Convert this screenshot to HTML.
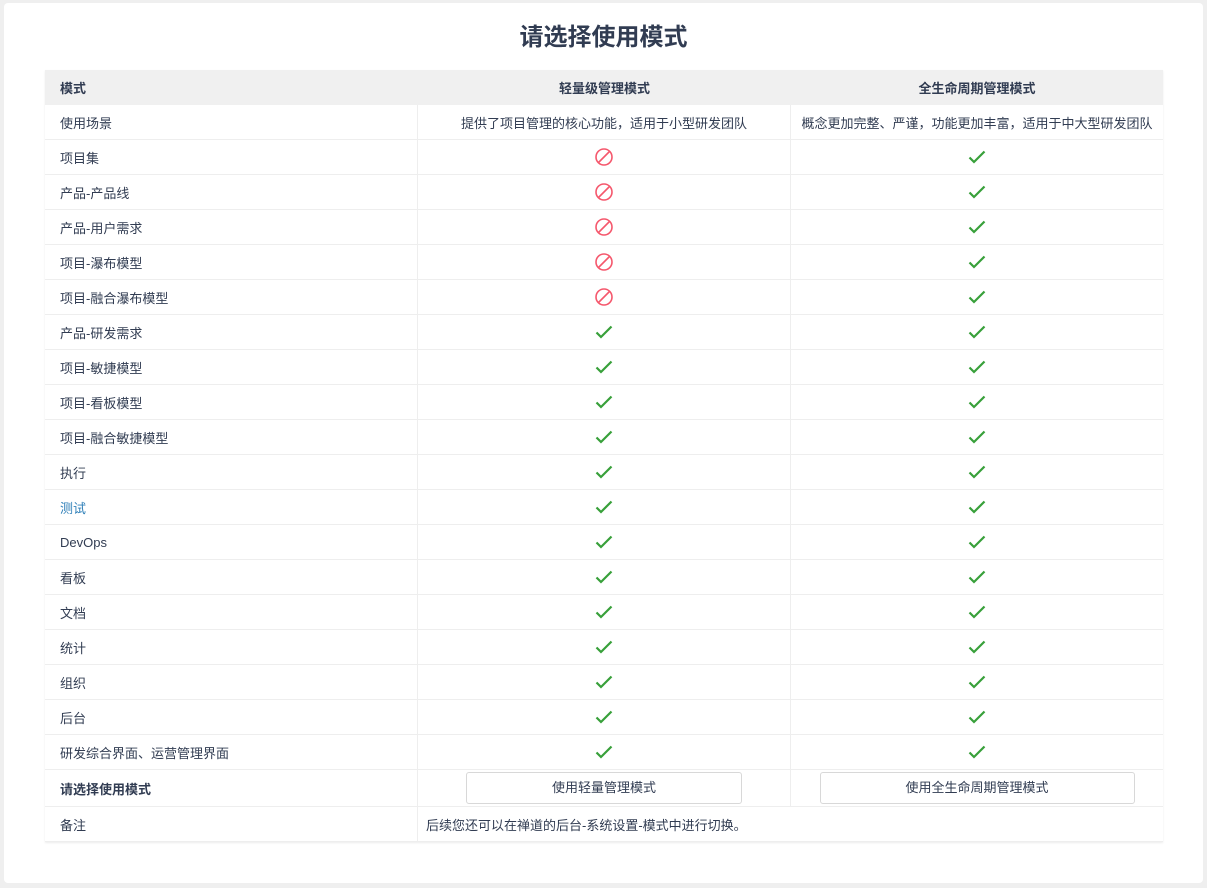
<!DOCTYPE html>
<html><head><meta charset="utf-8"><style>
body{margin:0;background:#efefef;font-family:"Liberation Sans","Noto Sans CJK SC",sans-serif;font-size:13px;color:#313c52;}
.card{position:absolute;left:4px;top:3px;width:1199px;height:880px;background:#fff;border-radius:4px;}
h1{position:absolute;left:0;right:0;top:20px;margin:0;text-align:center;font-size:24px;font-weight:bold;color:#313c52;line-height:30px;}
table{position:absolute;left:41px;top:67px;width:1118px;border-collapse:separate;border-spacing:0;box-shadow:0 1px 2px rgba(0,0,0,.08);}
td,th{height:34px;padding:0;border-bottom:1px solid #eee;border-right:1px solid #eee;box-sizing:content-box;}
th{height:35px;background:#f0f0f0;font-weight:bold;border:none;}
td:first-child,th:first-child{padding-left:15px;text-align:left;width:357px;}
td:nth-child(2),th:nth-child(2){width:372px;text-align:center;}
td:nth-child(3),th:nth-child(3){text-align:center;border-right:none;}
.btn{display:inline-block;height:30px;line-height:30px;border:1px solid #d8d8d8;border-radius:3px;font-size:13px;color:#313c52;background:#fff;}
svg{vertical-align:middle;}
</style></head><body><div class="card">
<h1>请选择使用模式</h1>
<table>
<tr><th>模式</th><th>轻量级管理模式</th><th>全生命周期管理模式</th></tr>
<tr><td>使用场景</td><td>提供了项目管理的核心功能，适用于小型研发团队</td><td>概念更加完整、严谨，功能更加丰富，适用于中大型研发团队</td></tr>
<tr><td>项目集</td><td><svg width="20" height="20"><circle cx="10" cy="10" r="8" fill="none" stroke="#f5576c" stroke-width="1.6"/><line x1="4.5" y1="15.5" x2="15.5" y2="4.5" stroke="#f5576c" stroke-width="1.6"/></svg></td><td><svg width="20" height="20"><path d="M2.5 10.5l4.5 4.5 10.5-10.5" fill="none" stroke="#38a03a" stroke-width="2.2"/></svg></td></tr>
<tr><td>产品-产品线</td><td><svg width="20" height="20"><circle cx="10" cy="10" r="8" fill="none" stroke="#f5576c" stroke-width="1.6"/><line x1="4.5" y1="15.5" x2="15.5" y2="4.5" stroke="#f5576c" stroke-width="1.6"/></svg></td><td><svg width="20" height="20"><path d="M2.5 10.5l4.5 4.5 10.5-10.5" fill="none" stroke="#38a03a" stroke-width="2.2"/></svg></td></tr>
<tr><td>产品-用户需求</td><td><svg width="20" height="20"><circle cx="10" cy="10" r="8" fill="none" stroke="#f5576c" stroke-width="1.6"/><line x1="4.5" y1="15.5" x2="15.5" y2="4.5" stroke="#f5576c" stroke-width="1.6"/></svg></td><td><svg width="20" height="20"><path d="M2.5 10.5l4.5 4.5 10.5-10.5" fill="none" stroke="#38a03a" stroke-width="2.2"/></svg></td></tr>
<tr><td>项目-瀑布模型</td><td><svg width="20" height="20"><circle cx="10" cy="10" r="8" fill="none" stroke="#f5576c" stroke-width="1.6"/><line x1="4.5" y1="15.5" x2="15.5" y2="4.5" stroke="#f5576c" stroke-width="1.6"/></svg></td><td><svg width="20" height="20"><path d="M2.5 10.5l4.5 4.5 10.5-10.5" fill="none" stroke="#38a03a" stroke-width="2.2"/></svg></td></tr>
<tr><td>项目-融合瀑布模型</td><td><svg width="20" height="20"><circle cx="10" cy="10" r="8" fill="none" stroke="#f5576c" stroke-width="1.6"/><line x1="4.5" y1="15.5" x2="15.5" y2="4.5" stroke="#f5576c" stroke-width="1.6"/></svg></td><td><svg width="20" height="20"><path d="M2.5 10.5l4.5 4.5 10.5-10.5" fill="none" stroke="#38a03a" stroke-width="2.2"/></svg></td></tr>
<tr><td>产品-研发需求</td><td><svg width="20" height="20"><path d="M2.5 10.5l4.5 4.5 10.5-10.5" fill="none" stroke="#38a03a" stroke-width="2.2"/></svg></td><td><svg width="20" height="20"><path d="M2.5 10.5l4.5 4.5 10.5-10.5" fill="none" stroke="#38a03a" stroke-width="2.2"/></svg></td></tr>
<tr><td>项目-敏捷模型</td><td><svg width="20" height="20"><path d="M2.5 10.5l4.5 4.5 10.5-10.5" fill="none" stroke="#38a03a" stroke-width="2.2"/></svg></td><td><svg width="20" height="20"><path d="M2.5 10.5l4.5 4.5 10.5-10.5" fill="none" stroke="#38a03a" stroke-width="2.2"/></svg></td></tr>
<tr><td>项目-看板模型</td><td><svg width="20" height="20"><path d="M2.5 10.5l4.5 4.5 10.5-10.5" fill="none" stroke="#38a03a" stroke-width="2.2"/></svg></td><td><svg width="20" height="20"><path d="M2.5 10.5l4.5 4.5 10.5-10.5" fill="none" stroke="#38a03a" stroke-width="2.2"/></svg></td></tr>
<tr><td>项目-融合敏捷模型</td><td><svg width="20" height="20"><path d="M2.5 10.5l4.5 4.5 10.5-10.5" fill="none" stroke="#38a03a" stroke-width="2.2"/></svg></td><td><svg width="20" height="20"><path d="M2.5 10.5l4.5 4.5 10.5-10.5" fill="none" stroke="#38a03a" stroke-width="2.2"/></svg></td></tr>
<tr><td>执行</td><td><svg width="20" height="20"><path d="M2.5 10.5l4.5 4.5 10.5-10.5" fill="none" stroke="#38a03a" stroke-width="2.2"/></svg></td><td><svg width="20" height="20"><path d="M2.5 10.5l4.5 4.5 10.5-10.5" fill="none" stroke="#38a03a" stroke-width="2.2"/></svg></td></tr>
<tr><td style="color:#2e7fb8">测试</td><td><svg width="20" height="20"><path d="M2.5 10.5l4.5 4.5 10.5-10.5" fill="none" stroke="#38a03a" stroke-width="2.2"/></svg></td><td><svg width="20" height="20"><path d="M2.5 10.5l4.5 4.5 10.5-10.5" fill="none" stroke="#38a03a" stroke-width="2.2"/></svg></td></tr>
<tr><td>DevOps</td><td><svg width="20" height="20"><path d="M2.5 10.5l4.5 4.5 10.5-10.5" fill="none" stroke="#38a03a" stroke-width="2.2"/></svg></td><td><svg width="20" height="20"><path d="M2.5 10.5l4.5 4.5 10.5-10.5" fill="none" stroke="#38a03a" stroke-width="2.2"/></svg></td></tr>
<tr><td>看板</td><td><svg width="20" height="20"><path d="M2.5 10.5l4.5 4.5 10.5-10.5" fill="none" stroke="#38a03a" stroke-width="2.2"/></svg></td><td><svg width="20" height="20"><path d="M2.5 10.5l4.5 4.5 10.5-10.5" fill="none" stroke="#38a03a" stroke-width="2.2"/></svg></td></tr>
<tr><td>文档</td><td><svg width="20" height="20"><path d="M2.5 10.5l4.5 4.5 10.5-10.5" fill="none" stroke="#38a03a" stroke-width="2.2"/></svg></td><td><svg width="20" height="20"><path d="M2.5 10.5l4.5 4.5 10.5-10.5" fill="none" stroke="#38a03a" stroke-width="2.2"/></svg></td></tr>
<tr><td>统计</td><td><svg width="20" height="20"><path d="M2.5 10.5l4.5 4.5 10.5-10.5" fill="none" stroke="#38a03a" stroke-width="2.2"/></svg></td><td><svg width="20" height="20"><path d="M2.5 10.5l4.5 4.5 10.5-10.5" fill="none" stroke="#38a03a" stroke-width="2.2"/></svg></td></tr>
<tr><td>组织</td><td><svg width="20" height="20"><path d="M2.5 10.5l4.5 4.5 10.5-10.5" fill="none" stroke="#38a03a" stroke-width="2.2"/></svg></td><td><svg width="20" height="20"><path d="M2.5 10.5l4.5 4.5 10.5-10.5" fill="none" stroke="#38a03a" stroke-width="2.2"/></svg></td></tr>
<tr><td>后台</td><td><svg width="20" height="20"><path d="M2.5 10.5l4.5 4.5 10.5-10.5" fill="none" stroke="#38a03a" stroke-width="2.2"/></svg></td><td><svg width="20" height="20"><path d="M2.5 10.5l4.5 4.5 10.5-10.5" fill="none" stroke="#38a03a" stroke-width="2.2"/></svg></td></tr>
<tr><td>研发综合界面、运营管理界面</td><td><svg width="20" height="20"><path d="M2.5 10.5l4.5 4.5 10.5-10.5" fill="none" stroke="#38a03a" stroke-width="2.2"/></svg></td><td><svg width="20" height="20"><path d="M2.5 10.5l4.5 4.5 10.5-10.5" fill="none" stroke="#38a03a" stroke-width="2.2"/></svg></td></tr>
<tr><td style="height:36px;font-weight:bold">请选择使用模式</td><td><span class="btn" style="width:274px">使用轻量管理模式</span></td><td><span class="btn" style="width:313px">使用全生命周期管理模式</span></td></tr>
<tr><td>备注</td><td colspan="2" style="text-align:left;padding-left:8px;border-right:none">后续您还可以在禅道的后台-系统设置-模式中进行切换。</td></tr>
</table>
</div></body></html>
